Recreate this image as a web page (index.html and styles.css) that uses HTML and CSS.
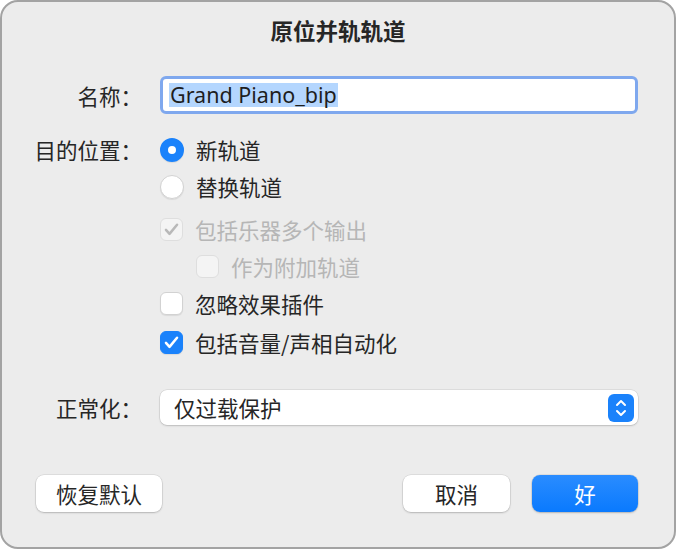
FILE: index.html
```html
<!DOCTYPE html>
<html lang="zh-CN">
<head>
    <meta charset="UTF-8">
    <title>原位并轨轨道</title>
    <link rel="stylesheet" href="styles.css">
</head>
<body>
    <div class="window">
        <h1 class="title">原位并轨轨道</h1>

        <div class="row name-row">
            <div class="label">名称：</div>
            <div class="text-field"><span class="selected">Grand Piano_bip</span></div>
        </div>

        <div class="row opt first">
            <div class="label">目的位置：</div>
            <span class="radio on"></span>
            <span class="opt-text">新轨道</span>
        </div>
        <div class="row opt">
            <div class="label"></div>
            <span class="radio"></span>
            <span class="opt-text">替换轨道</span>
        </div>
        <div class="row opt group">
            <div class="label"></div>
            <span class="check disabled checked">
                <svg viewBox="0 0 24 24" width="19" height="19"><path d="M5 12.5l4.5 5L19 6" fill="none" stroke="#b9b9b9" stroke-width="3.2" stroke-linecap="round" stroke-linejoin="round"/></svg>
            </span>
            <span class="opt-text dim">包括乐器多个输出</span>
        </div>
        <div class="row opt">
            <div class="label"></div>
            <span class="check disabled indent"></span>
            <span class="opt-text dim">作为附加轨道</span>
        </div>
        <div class="row opt">
            <div class="label"></div>
            <span class="check"></span>
            <span class="opt-text">忽略效果插件</span>
        </div>
        <div class="row opt last">
            <div class="label"></div>
            <span class="check on">
                <svg viewBox="0 0 24 24" width="19" height="19"><path d="M5 12.5l4.5 5L19 6" fill="none" stroke="#fff" stroke-width="3.2" stroke-linecap="round" stroke-linejoin="round"/></svg>
            </span>
            <span class="opt-text">包括音量/声相自动化</span>
        </div>

        <div class="row norm-row">
            <div class="label">正常化：</div>
            <div class="popup">
                <span>仅过载保护</span>
                <span class="stepper">
                    <svg viewBox="0 0 26 28" width="26" height="28"><path d="M9 11l4-4 4 4M9 17l4 4 4-4" fill="none" stroke="#fff" stroke-width="2" stroke-linecap="round" stroke-linejoin="round"/></svg>
                </span>
            </div>
        </div>

        <div class="buttons">
            <button class="btn wide">恢复默认</button>
            <span class="spacer"></span>
            <button class="btn">取消</button>
            <button class="btn primary">好</button>
        </div>
    </div>
</body>
</html>
```

FILE: styles.css
```css
body {
    margin: 0;
    background: #ffffff;
    font-family: "Noto Sans CJK SC", "Noto Sans", sans-serif;
    color: #262626;
}
.window {
    width: 676px;
    height: 549px;
    box-sizing: border-box;
    border: 2px solid #a3a3a3;
    border-radius: 18px;
    background: #ececec;
    padding: 0 36px 0 0;
}
.title {
    margin: 0;
    padding-top: 13px;
    height: 31px;
    line-height: 31px;
    text-align: center;
    font-size: 22.5px;
    font-weight: bold;
    color: #262626;
    padding-left: 36px;
}
.row {
    display: flex;
    align-items: center;
}
.label {
    width: 140px;
    flex: none;
    text-align: right;
    font-size: 21.5px;
    margin-right: 18px;
}
.name-row {
    margin-top: 30px;
    height: 38px;
}
.text-field {
    flex: 1;
    height: 38px;
    box-sizing: border-box;
    border: 3px solid #7fa8ee;
    border-radius: 6px;
    background: #fff;
    padding: 4px 6px;
    font-family: "Noto Sans", "Noto Sans CJK SC", sans-serif;
    font-size: 21.5px;
    line-height: 24px;
    color: #1e1e1e;
}
.selected {
    background: #b4d6fe;
    display: inline-block;
    padding: 0 1px;
}
.opt {
    height: 37px;
    padding-left: 2px;
}
.opt .label {
    margin-left: -2px;
}
.opt.first {
    margin-top: 17px;
}
.opt.group {
    margin-top: 6px;
}
.opt.last {
    margin-top: 2px;
}
.opt-text {
    font-size: 21.5px;
    margin-left: 12px;
}
.opt-text.dim {
    color: #b6b6b6;
}
.radio {
    width: 24px;
    height: 24px;
    box-sizing: border-box;
    border-radius: 50%;
    background: #fff;
    border: 1px solid #d2d2d2;
    box-shadow: 0 1px 1px rgba(0,0,0,0.08);
    flex: none;
}
.radio.on {
    border: 8px solid #1a82fb;
    background: #fff;
}
.check {
    width: 23px;
    height: 23px;
    box-sizing: border-box;
    border-radius: 6px;
    background: #fff;
    border: 1px solid #d2d2d2;
    box-shadow: 0 1px 1px rgba(0,0,0,0.08);
    flex: none;
    display: flex;
    align-items: center;
    justify-content: center;
}
.check.on {
    background: #1a82fb;
    border-color: #1a82fb;
}
.check.disabled {
    background: #f4f4f4;
    border-color: #dedede;
    box-shadow: none;
}
.check.indent {
    margin-left: 36px;
}
.norm-row {
    margin-top: 29px;
    height: 35px;
}
.popup {
    flex: 1;
    height: 35px;
    box-sizing: border-box;
    background: #fff;
    border-radius: 7px;
    box-shadow: 0 0 0 0.5px rgba(0,0,0,0.12), 0 1px 2px rgba(0,0,0,0.15);
    display: flex;
    align-items: center;
    justify-content: space-between;
    padding: 0 4px 0 14px;
    font-size: 21.5px;
}
.stepper {
    width: 26px;
    height: 28px;
    background: #1a82fb;
    border-radius: 6px;
    display: flex;
}
.buttons {
    display: flex;
    margin-top: 50px;
    padding-left: 34px;
    gap: 22px;
}
.spacer {
    flex: 1;
}
.btn {
    height: 37px;
    width: 107px;
    border: none;
    border-radius: 8px;
    background: #fff;
    box-shadow: 0 0 0 0.5px rgba(0,0,0,0.12), 0 1px 2px rgba(0,0,0,0.18);
    font-family: "Noto Sans CJK SC", sans-serif;
    font-size: 21.5px;
    color: #262626;
    padding: 0;
}
.btn.wide {
    width: 126px;
}
.btn.primary {
    width: 106px;
    background: linear-gradient(#2a8cff, #0a7afe);
    color: #fff;
}
```
